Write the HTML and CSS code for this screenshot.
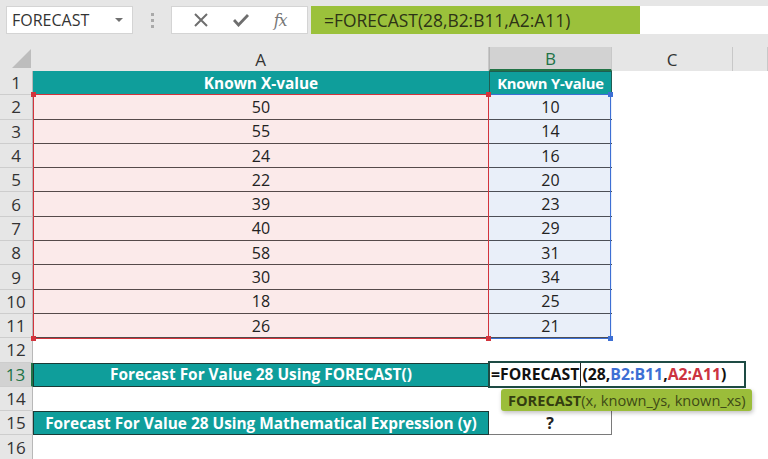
FILE: index.html
```html
<!DOCTYPE html>
<html lang="en">
<head>
    <meta charset="UTF-8">
    <title>FORECAST</title>
    <link rel="stylesheet" href="styles.css">
</head>
<body>
    <div class="ribbon">
        <div class="namebox">
            <span>FORECAST</span>
            <svg class="caret" width="8" height="5" viewBox="0 0 8 5"><path d="M0 0h8L4 4z" fill="#707070"/></svg>
        </div>
        <div class="grip"><i></i><i></i><i></i></div>
        <div class="fxbox">
            <svg width="14" height="14" viewBox="0 0 14 14"><path d="M1 1l12 12M13 1L1 13" stroke="#6e6e6e" stroke-width="2"/></svg>
            <svg width="16" height="14" viewBox="0 0 16 14"><path d="M1 7l4.5 5L15 2" stroke="#6e6e6e" stroke-width="2.8" fill="none"/></svg>
            <span class="fx">fx</span>
        </div>
        <div class="formula">=FORECAST(28,B2:B11,A2:A11)</div>
        <div class="formula-rest"></div>
    </div>

    <div class="sheet">
        <div class="corner"><svg width="19" height="19" viewBox="0 0 19 19"><path d="M19 0v19H0z" fill="#bdbdbd"/></svg></div>
        <div class="colhead">A</div>
        <div class="colhead sel">B</div>
        <div class="colhead">C</div>
        <div class="colhead"></div>

        <div class="rowhead">1</div>
        <div class="cell title">Known X-value</div>
        <div class="cell title boxed">Known Y-value</div>
        <div class="cell"></div><div class="cell"></div>

        <div class="rowhead">2</div><div class="cell xv">50</div><div class="cell yv">10</div><div class="cell"></div><div class="cell"></div>
        <div class="rowhead">3</div><div class="cell xv">55</div><div class="cell yv">14</div><div class="cell"></div><div class="cell"></div>
        <div class="rowhead">4</div><div class="cell xv">24</div><div class="cell yv">16</div><div class="cell"></div><div class="cell"></div>
        <div class="rowhead">5</div><div class="cell xv">22</div><div class="cell yv">20</div><div class="cell"></div><div class="cell"></div>
        <div class="rowhead">6</div><div class="cell xv">39</div><div class="cell yv">23</div><div class="cell"></div><div class="cell"></div>
        <div class="rowhead">7</div><div class="cell xv">40</div><div class="cell yv">29</div><div class="cell"></div><div class="cell"></div>
        <div class="rowhead">8</div><div class="cell xv">58</div><div class="cell yv">31</div><div class="cell"></div><div class="cell"></div>
        <div class="rowhead">9</div><div class="cell xv">30</div><div class="cell yv">34</div><div class="cell"></div><div class="cell"></div>
        <div class="rowhead">10</div><div class="cell xv">18</div><div class="cell yv">25</div><div class="cell"></div><div class="cell"></div>
        <div class="rowhead">11</div><div class="cell xv">26</div><div class="cell yv">21</div><div class="cell"></div><div class="cell"></div>

        <div class="rowhead">12</div><div class="cell"></div><div class="cell"></div><div class="cell"></div><div class="cell"></div>

        <div class="rowhead sel">13</div>
        <div class="cell title dark">Forecast For Value 28 Using FORECAST()</div>
        <div class="cell"></div><div class="cell"></div><div class="cell"></div>

        <div class="rowhead">14</div><div class="cell"></div><div class="cell"></div><div class="cell"></div><div class="cell"></div>

        <div class="rowhead">15</div>
        <div class="cell title dark">Forecast For Value 28 Using Mathematical Expression (y)</div>
        <div class="cell answer">?</div>
        <div class="cell"></div><div class="cell"></div>

        <div class="rowhead">16</div><div class="cell"></div><div class="cell"></div><div class="cell"></div><div class="cell"></div>

        <!-- formula reference highlights and the cell being edited -->
        <div class="range range-y"><i class="tr"></i><i class="br"></i></div>
        <div class="range range-x"><i class="tl"></i><i class="tr"></i><i class="bl"></i><i class="br"></i></div>
        <div class="editing">=FORECAST<span class="caret-line"></span>(28,<span class="ref-y">B2:B11</span>,<span class="ref-x">A2:A11</span>)</div>
        <div class="tip"><b>FORECAST</b>(x, known_ys, known_xs)</div>
    </div>
</body>
</html>
```

FILE: styles.css
```css
* {
    box-sizing: border-box;
}

body {
    margin: 0;
    width: 768px;
    height: 459px;
    overflow: hidden;
    background: #fff;
    font-family: "Open Sans", "Noto Sans", sans-serif;
    color: #222;
}

.ribbon {
    height: 47px;
    background: #e6e6e6;
    display: flex;
    align-items: flex-start;
    padding-top: 6px;
}

.namebox {
    width: 127px;
    height: 28px;
    margin-left: 6px;
    background: #fff;
    border: 1px solid #d4d4d4;
    display: flex;
    align-items: center;
    justify-content: space-between;
    padding: 0 9px 0 5px;
    font-size: 16px;
    color: #333;
}

.grip {
    width: 38px;
    height: 28px;
    display: flex;
    flex-direction: column;
    align-items: center;
    justify-content: center;
    gap: 3px;
}

.grip i {
    width: 3px;
    height: 3px;
    background: #a9a9a9;
}

.fxbox {
    width: 137px;
    height: 28px;
    background: #fff;
    border: 1px solid #d4d4d4;
    display: flex;
    align-items: center;
    justify-content: space-around;
    padding: 0 8px 0 10px;
}

.fx {
    font-family: "DejaVu Serif", "Liberation Serif", serif;
    font-style: italic;
    font-size: 16px;
    color: #777;
    letter-spacing: -1px;
}

.formula {
    width: 329px;
    height: 28px;
    margin-left: 3px;
    background: #9bc13b;
    color: #2d3316;
    font-size: 17.4px;
    line-height: 28px;
    padding-left: 13px;
}

.formula-rest {
    flex: 1;
    height: 28px;
    background: #fff;
}

.sheet {
    position: relative;
    display: grid;
    grid-template-columns: 33px 456px 123px 121px 35px;
    grid-template-rows: 24px repeat(16, 24.3px);
}

.corner {
    background: #e6e6e6;
    display: flex;
    align-items: flex-end;
    justify-content: flex-end;
    padding: 0 2px 3px 0;
}

.colhead {
    background: #e6e6e6;
    border-right: 1px solid #c8c8c8;
    font-size: 17px;
    color: #333;
    display: grid;
    place-items: center;
}

.colhead.sel {
    background: #d2d2d2;
    color: #217346;
    border-left: 1px solid #b6b6b6;
    border-bottom: 2px solid #217346;
}

.rowhead {
    background: #e6e6e6;
    border-right: 1px solid #b8b8b8;
    border-bottom: 1px solid #cdcdcd;
    font-size: 17px;
    color: #333;
    display: grid;
    place-items: center;
}

.rowhead.sel {
    background: #d2d2d2;
    color: #217346;
    border-right: 2px solid #217346;
}

.cell {
    display: grid;
    place-items: center;
    font-size: 16px;
    color: #222;
}

.title {
    background: #0f9e9b;
    color: #fff;
    font-weight: bold;
    font-size: 15.4px;
    white-space: nowrap;
}

.title.boxed {
    border: 1px solid #1f5d52;
    font-size: 14.8px;
    letter-spacing: -0.2px;
}

.title.dark {
    border: 1px solid #1b3a36;
}

.xv {
    background: #fbeaea;
    border-bottom: 1px solid #554a4a;
}

.yv {
    background: #e9eff9;
    border-bottom: 1px solid #4c4f57;
}

.answer {
    font-weight: bold;
    border-right: 1px solid #7a7a7a;
    border-bottom: 1px solid #7a7a7a;
}

.range {
    position: absolute;
    grid-row: 3 / 13;
    top: -1px;
    bottom: -1px;
}

.range i {
    position: absolute;
    width: 5px;
    height: 5px;
}

.range .tl { top: -3px; left: -3px; }
.range .tr { top: -3px; right: -3px; }
.range .bl { bottom: -3px; left: -3px; }
.range .br { bottom: -3px; right: -3px; }

.range-x {
    grid-column: 2 / 3;
    left: 0;
    right: 0;
    border: 1px solid #d2343c;
}

.range-x i {
    background: #d2343c;
}

.range-y {
    grid-column: 3 / 4;
    left: -1px;
    right: 1px;
    border: 1px solid #3d6fd4;
}

.range-y i {
    background: #3d6fd4;
}

.editing {
    position: absolute;
    grid-row: 14 / 15;
    grid-column: 3 / 6;
    top: -2px;
    bottom: -1px;
    left: -1px;
    width: 258px;
    background: #fff;
    border: 2px solid #1e4b44;
    font-size: 15.8px;
    font-weight: bold;
    color: #111;
    display: flex;
    align-items: center;
    padding-left: 1px;
    white-space: nowrap;
}

.caret-line {
    width: 1px;
    align-self: stretch;
    background: #222;
    margin: 0 1px;
}

.ref-y {
    color: #3d6fd4;
}

.ref-x {
    color: #cc3340;
}

.tip {
    position: absolute;
    grid-row: 15 / 16;
    grid-column: 3 / 6;
    top: 2px;
    left: 12px;
    width: 251px;
    height: 22px;
    background: #9bbd3a;
    border-radius: 3px;
    box-shadow: 1px 2px 4px rgba(0, 0, 0, 0.25);
    color: #3e4a16;
    font-size: 14.6px;
    line-height: 22px;
    padding-left: 7px;
    white-space: nowrap;
}

.tip b {
    color: #333d10;
}
```
